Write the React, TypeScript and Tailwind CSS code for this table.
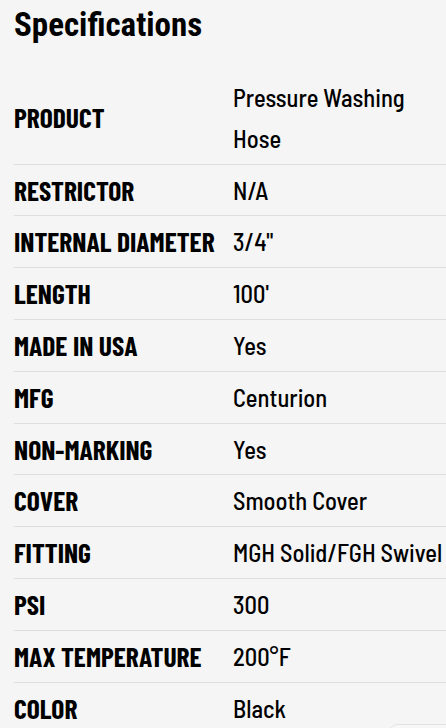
const rows: [string, string[]][] = [
  ["PRODUCT", ["Pressure Washing", "Hose"]],
  ["RESTRICTOR", ["N/A"]],
  ["INTERNAL DIAMETER", ["3/4\""]],
  ["LENGTH", ["100'"]],
  ["MADE IN USA", ["Yes"]],
  ["MFG", ["Centurion"]],
  ["NON-MARKING", ["Yes"]],
  ["COVER", ["Smooth Cover"]],
  ["FITTING", ["MGH Solid/FGH Swivel"]],
  ["PSI", ["300"]],
  ["MAX TEMPERATURE", ["200°F"]],
  ["COLOR", ["Black"]],
];

export default function App() {
  return (
    <div className="relative min-h-[728px] w-[446px] overflow-hidden bg-[#f5f5f5] text-black">
      <div className="pl-[14px] pt-[6px]">
        <h2 className="m-0 font-['Roboto_Condensed',sans-serif] text-[33px] font-bold leading-[38px]">
          Specifications
        </h2>
        <div className="mt-[28px] flex flex-col">
          {rows.map(([label, value]) => (
            <div key={label} className="flex items-center border-b border-[#dedede] py-[5px]">
              <div className="w-[219px] shrink-0 font-['Barlow_Condensed',sans-serif] text-[27.5px] font-bold leading-[40.8px]">
                {label}
              </div>
              <div className="flex flex-col whitespace-nowrap font-['Barlow_Semi_Condensed',sans-serif] text-[24.5px] font-medium leading-[40.8px]">
                {value.map((v) => (
                  <span key={v}>{v}</span>
                ))}
              </div>
            </div>
          ))}
        </div>
      </div>
      <div className="absolute left-[388px] top-[724px] h-[40px] w-[80px] rounded-[10px] border border-[#e2e2e2] bg-[#f7f7f7]" />
    </div>
  );
}
